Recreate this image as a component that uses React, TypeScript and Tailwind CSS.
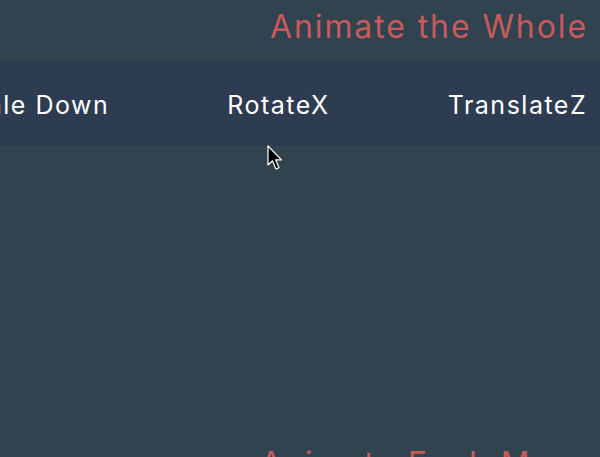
import React from "react";

function Cursor() {
  return (
    <svg width="18" height="27" viewBox="0 0 18 27" className="absolute left-[267px] top-[145px]">
      <path d="M1 1 L1 20 L5.5 15.8 L9 24 L12 22.7 L8.6 14.8 L14.5 14.8 Z" fill="#000" stroke="#fff" strokeWidth="1.2" strokeLinejoin="round" />
    </svg>
  );
}

export default function App() {
  const items = ["Scale Up", "Scale Down", "RotateX", "TranslateZ", "RotateY"];
  return (
    <div className="relative w-[600px] h-[457px] overflow-hidden bg-[#324350]" style={{ fontFamily: "Inter, 'Open Sans', sans-serif" }}>
      <div className="h-[61px] pl-[270px] pt-[7px] leading-[40px] whitespace-nowrap text-[32px] text-[#c95a5c] tracking-[1.9px]">
        Animate the Whole Menu
      </div>
      <div className="h-[85px] bg-[#2e3c52] flex items-center whitespace-nowrap">
        <div className="flex gap-[118px] ml-[-282px] text-[25px] leading-[30px] pt-[2px] text-white tracking-[1.5px]">
          {items.map((t) => (
            <span key={t}>{t}</span>
          ))}
        </div>
      </div>
      <div className="pl-[260px] pt-[298px] leading-[40px] whitespace-nowrap text-[32px] text-[#c95a5c] tracking-[1.9px]">
        Animate Each Menu
      </div>
      <Cursor />
    </div>
  );
}
